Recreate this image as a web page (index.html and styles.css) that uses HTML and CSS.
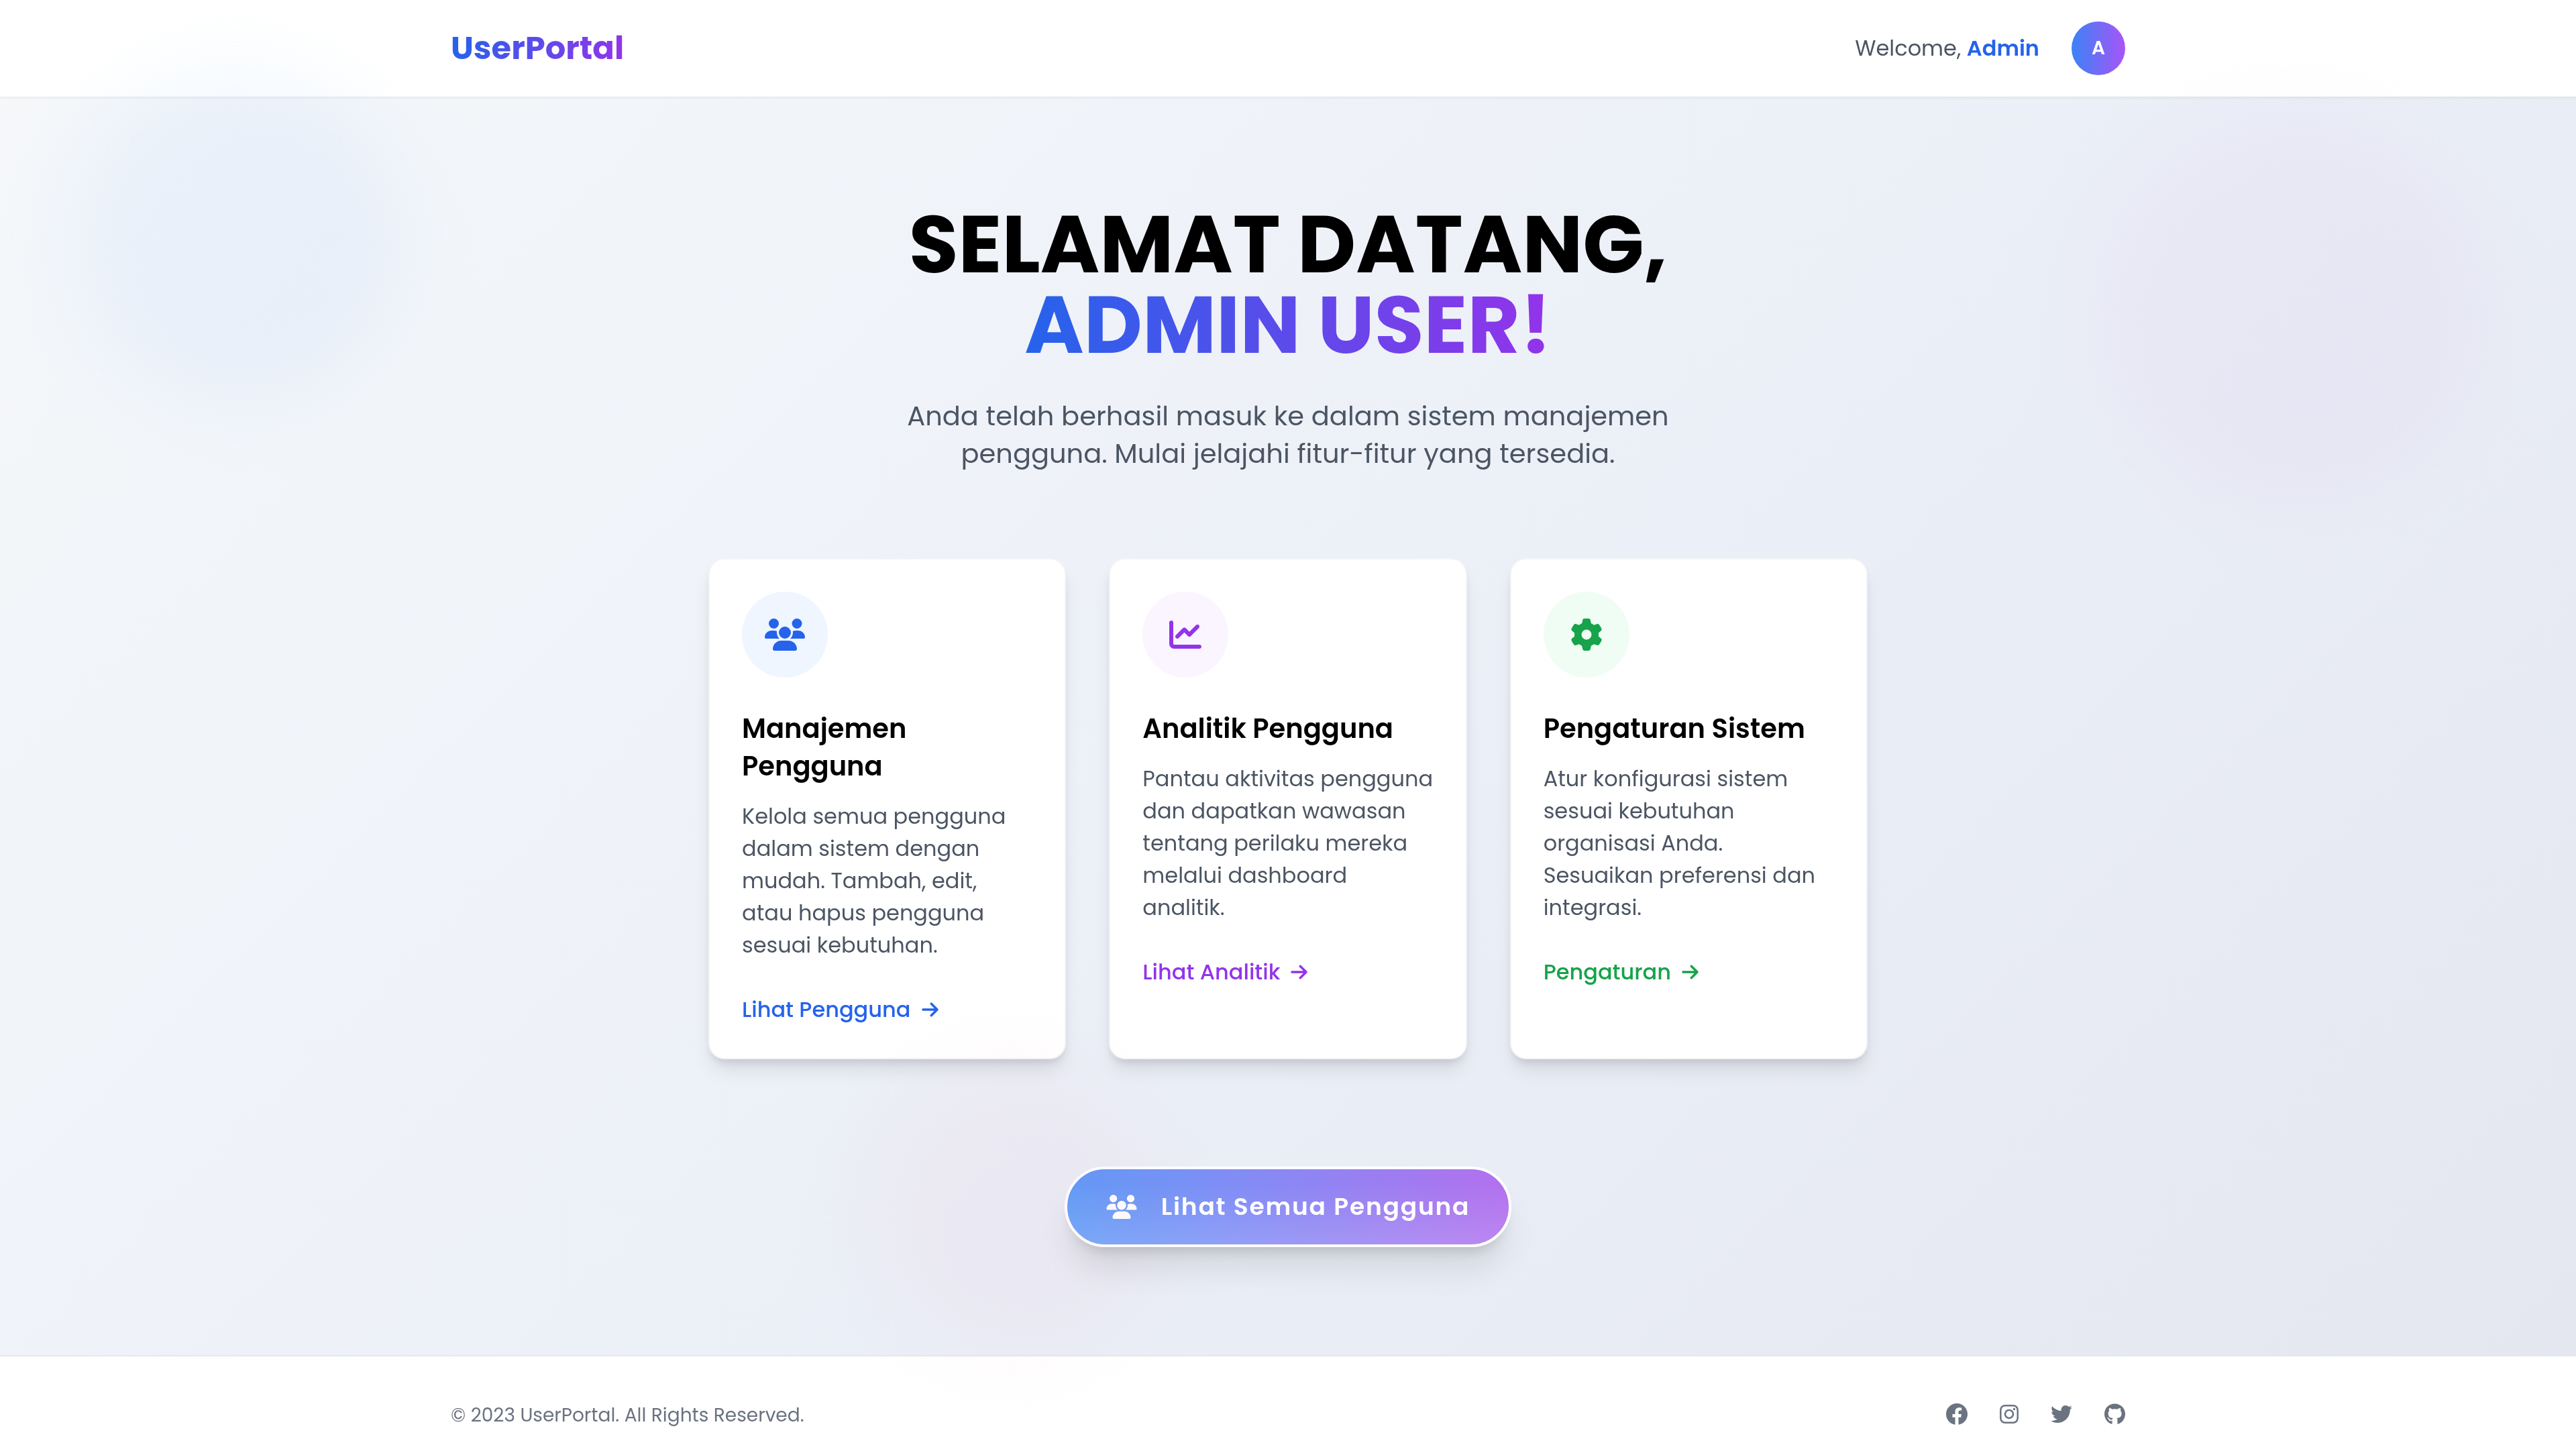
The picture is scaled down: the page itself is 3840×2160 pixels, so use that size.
FILE: index.html
```html
<!DOCTYPE html>
<html lang="id">
<head>
<meta charset="utf-8">
<title>UserPortal</title>
<meta name="viewport" content="width=device-width, initial-scale=1">
<link rel="stylesheet" href="styles.css">
</head>
<body>
<svg class="sprite" aria-hidden="true">
  <symbol id="users" viewBox="0 0 640 512"><path d="M144 0a80 80 0 1 1 0 160A80 80 0 1 1 144 0zM512 0a80 80 0 1 1 0 160A80 80 0 1 1 512 0zM0 298.700C0 239.800 47.800 192 106.700 192h42.700c15.900 0 31 3.500 44.600 9.700c-1.300 7.200-1.900 14.700-1.900 22.300c0 38.200 16.800 72.500 43.300 96c-.2 0-.4 0-.7 0H21.300C9.600 320 0 310.400 0 298.700zM405.300 320c-.2 0-.4 0-.7 0c26.600-23.500 43.300-57.800 43.300-96c0-7.600-.7-15-1.900-22.300c13.600-6.300 28.700-9.700 44.600-9.700h42.700C592.200 192 640 239.800 640 298.700c0 11.800-9.600 21.300-21.300 21.300H405.300zM224 224a96 96 0 1 1 192 0 96 96 0 1 1-192 0zM128 485.300C128 411.700 187.700 352 261.300 352H378.700C452.300 352 512 411.700 512 485.300c0 14.700-11.900 26.700-26.700 26.700H154.700c-14.700 0-26.700-11.900-26.700-26.700z"/></symbol>
  <symbol id="arrow" viewBox="0 0 448 512"><path d="M438.600 278.600c12.500-12.500 12.500-32.800 0-45.300l-160-160c-12.500-12.500-32.800-12.500-45.300 0s-12.500 32.800 0 45.300L338.800 224 32 224c-17.700 0-32 14.300-32 32s14.300 32 32 32l306.700 0L233.400 393.400c-12.500 12.500-12.500 32.800 0 45.300s32.800 12.500 45.300 0l160-160z"/></symbol>
</svg>
<div class="blob blob-blue"></div>
<div class="blob blob-purple"></div>
<div class="blob blob-pink"></div>

<header class="header">
  <div class="container bar">
    <a class="logo" href="#">UserPortal</a>
    <div class="account">
      <span class="welcome">Welcome, <strong>Admin</strong></span>
      <span class="avatar">A</span>
    </div>
  </div>
</header>

<main class="main">
  <h1 class="title">SELAMAT DATANG,<br><span class="title-name">ADMIN USER!</span></h1>
  <p class="lead">Anda telah berhasil masuk ke dalam sistem manajemen<br>pengguna. Mulai jelajahi fitur-fitur yang tersedia.</p>

  <div class="cards">
    <article class="card blue">
      <div class="badge"><svg class="icon icon-wide"><use href="#users"/></svg></div>
      <h2>Manajemen<br>Pengguna</h2>
      <p>Kelola semua pengguna<br>dalam sistem dengan<br>mudah. Tambah, edit,<br>atau hapus pengguna<br>sesuai kebutuhan.</p>
      <a href="#">Lihat Pengguna <svg class="arrow"><use href="#arrow"/></svg></a>
    </article>
    <article class="card purple">
      <div class="badge"><svg class="icon" viewBox="0 0 512 512"><path d="M64 64c0-17.700-14.300-32-32-32S0 46.300 0 64V400c0 44.200 35.800 80 80 80H480c17.700 0 32-14.300 32-32s-14.300-32-32-32H80c-8.800 0-16-7.200-16-16V64zm406.600 86.600c12.500-12.500 12.500-32.800 0-45.300s-32.800-12.500-45.300 0L320 210.700l-57.400-57.400c-12.500-12.500-32.800-12.500-45.300 0l-112 112c-12.500 12.500-12.500 32.800 0 45.300s32.800 12.500 45.300 0L240 221.300l57.400 57.400c12.500 12.500 32.800 12.500 45.300 0l128-128z"/></svg></div>
      <h2>Analitik Pengguna</h2>
      <p>Pantau aktivitas pengguna<br>dan dapatkan wawasan<br>tentang perilaku mereka<br>melalui dashboard<br>analitik.</p>
      <a href="#">Lihat Analitik <svg class="arrow"><use href="#arrow"/></svg></a>
    </article>
    <article class="card green">
      <div class="badge"><svg class="icon" viewBox="0 0 512 512"><path d="M495.900 166.600c3.200 8.700 .5 18.400-6.400 24.600l-43.300 39.400c1.100 8.300 1.700 16.800 1.700 25.400s-.6 17.100-1.700 25.400l43.300 39.400c6.900 6.200 9.600 15.900 6.400 24.600c-4.400 11.900-9.700 23.300-15.800 34.300l-4.700 8.100c-6.600 11-14 21.400-22.100 31.200c-5.900 7.200-15.700 9.600-24.500 6.800l-55.700-17.700c-13.400 10.300-28.200 18.900-44 25.400l-12.500 57.100c-2 9.100-9 16.300-18.200 17.800c-13.800 2.300-28 3.500-42.500 3.500s-28.700-1.200-42.500-3.500c-9.200-1.500-16.200-8.700-18.200-17.800l-12.500-57.100c-15.800-6.500-30.600-15.100-44-25.400L83.100 425.900c-8.800 2.800-18.600 .3-24.500-6.800c-8.100-9.800-15.500-20.200-22.100-31.200l-4.700-8.100c-6.100-11-11.400-22.400-15.800-34.300c-3.200-8.700-.5-18.400 6.400-24.600l43.300-39.400C64.600 273.100 64 264.600 64 256s.6-17.100 1.700-25.400L22.400 191.200c-6.900-6.200-9.600-15.900-6.400-24.600c4.400-11.900 9.700-23.300 15.800-34.300l4.700-8.100c6.600-11 14-21.400 22.100-31.200c5.900-7.200 15.700-9.600 24.500-6.800l55.700 17.700c13.400-10.300 28.200-18.900 44-25.400l12.500-57.100c2-9.100 9-16.300 18.200-17.800C227.300 1.200 241.500 0 256 0s28.700 1.200 42.500 3.500c9.200 1.500 16.200 8.700 18.200 17.800l12.500 57.100c15.800 6.500 30.600 15.100 44 25.400l55.700-17.700c8.800-2.800 18.600-.3 24.500 6.800c8.100 9.800 15.500 20.200 22.100 31.200l4.700 8.100c6.100 11 11.400 22.400 15.800 34.300zM256 336a80 80 0 1 0 0-160 80 80 0 1 0 0 160z"/></svg></div>
      <h2>Pengaturan Sistem</h2>
      <p>Atur konfigurasi sistem<br>sesuai kebutuhan<br>organisasi Anda.<br>Sesuaikan preferensi dan<br>integrasi.</p>
      <a href="#">Pengaturan <svg class="arrow"><use href="#arrow"/></svg></a>
    </article>
  </div>

  <button class="cta" type="button"><svg class="cta-icon"><use href="#users"/></svg>Lihat Semua Pengguna</button>
</main>

<footer class="footer">
  <div class="container bar">
    <p class="copy">© 2023 UserPortal. All Rights Reserved.</p>
    <nav class="social">
      <a href="#" aria-label="Facebook"><svg class="social-icon" viewBox="8 8 496 496"><path d="M504 256C504 119 393 8 256 8S8 119 8 256c0 123.780 90.690 226.380 209.250 245V327.690h-63V256h63v-54.640c0-62.150 37-96.480 93.670-96.480 27.140 0 55.520 4.840 55.520 4.840v61h-31.280c-30.800 0-40.410 19.120-40.410 38.730V256h68.780l-11 71.690h-57.780V501C413.310 482.380 504 379.780 504 256z"/></svg></a>
      <a href="#" aria-label="Instagram"><svg class="social-icon" viewBox="0 0 448 512"><path d="M224.100 141c-63.600 0-114.900 51.300-114.900 114.900s51.300 114.900 114.900 114.900S339 319.500 339 255.900 287.700 141 224.100 141zm0 189.600c-41.100 0-74.700-33.500-74.700-74.700s33.500-74.700 74.700-74.700 74.700 33.500 74.700 74.700-33.600 74.700-74.700 74.700zm146.400-194.300c0 14.900-12 26.800-26.800 26.800-14.900 0-26.800-12-26.800-26.800s12-26.800 26.800-26.800 26.800 12 26.800 26.800zm76.100 27.200c-1.700-35.900-9.900-67.700-36.200-93.900-26.200-26.200-58-34.400-93.900-36.200-37-2.100-147.900-2.100-184.900 0-35.800 1.700-67.600 9.900-93.900 36.100s-34.400 58-36.200 93.900c-2.100 37-2.100 147.900 0 184.900 1.700 35.900 9.900 67.700 36.200 93.900s58 34.400 93.900 36.200c37 2.100 147.900 2.100 184.900 0 35.900-1.700 67.700-9.900 93.900-36.200 26.200-26.200 34.400-58 36.200-93.900 2.100-37 2.100-147.800 0-184.800zM398.800 388c-7.800 19.600-22.900 34.700-42.600 42.600-29.500 11.700-99.500 9-132.100 9s-102.700 2.600-132.100-9c-19.600-7.800-34.700-22.900-42.600-42.600-11.700-29.500-9-99.500-9-132.100s-2.600-102.700 9-132.100c7.800-19.600 22.900-34.700 42.600-42.600 29.500-11.700 99.500-9 132.100-9s102.700-2.600 132.100 9c19.600 7.800 34.700 22.900 42.600 42.600 11.700 29.500 9 99.500 9 132.100s2.700 102.700-9 132.100z"/></svg></a>
      <a href="#" aria-label="Twitter"><svg class="social-icon" viewBox="0 0 512 512"><path d="M459.370 151.716c.325 4.548.325 9.097.325 13.645 0 138.720-105.583 298.558-298.558 298.558-59.452 0-114.680-17.219-161.137-47.106 8.447.974 16.568 1.299 25.340 1.299 49.055 0 94.213-16.568 130.274-44.832-46.132-.975-84.792-31.188-98.112-72.772 6.498.974 12.995 1.624 19.818 1.624 9.421 0 18.843-1.300 27.614-3.573-48.081-9.747-84.143-51.980-84.143-102.985v-1.299c13.969 7.797 30.214 12.670 47.431 13.319-28.264-18.843-46.781-51.005-46.781-87.391 0-19.492 5.197-37.360 14.294-52.954 51.655 63.675 129.300 105.258 216.365 109.807-1.624-7.797-2.599-15.918-2.599-24.040 0-57.828 46.782-104.934 104.934-104.934 30.213 0 57.502 12.670 76.670 33.137 23.715-4.548 46.456-13.320 66.599-25.340-7.798 24.366-24.366 44.833-46.132 57.827 21.117-2.273 41.584-8.122 60.426-16.243-14.292 20.791-32.161 39.308-52.628 54.253z"/></svg></a>
      <a href="#" aria-label="GitHub"><svg class="social-icon" viewBox="0 0 496 512"><path d="M165.900 397.400c0 2-2.300 3.600-5.200 3.600-3.300.3-5.600-1.300-5.600-3.600 0-2 2.300-3.600 5.200-3.600 3-.3 5.600 1.300 5.600 3.600zm-31.100-4.500c-.7 2 1.300 4.300 4.300 4.900 2.600 1 5.600 0 6.200-2s-1.300-4.300-4.300-5.200c-2.600-.7-5.500.3-6.200 2.300zm44.200-1.700c-2.900.7-4.900 2.600-4.600 4.900.3 2 2.900 3.300 5.900 2.600 2.900-.7 4.900-2.600 4.600-4.600-.3-1.900-3-3.200-5.900-2.900zM244.800 8C106.100 8 0 113.300 0 252c0 110.900 69.800 205.800 169.500 239.200 12.800 2.300 17.300-5.600 17.300-12.100 0-6.200-.3-40.400-.3-61.400 0 0-70 15-84.700-29.800 0 0-11.400-29.100-27.800-36.600 0 0-22.900-15.700 1.600-15.400 0 0 24.900 2 38.600 25.800 21.900 38.600 58.600 27.500 72.900 20.900 2.300-16 8.800-27.100 16-33.700-55.900-6.200-112.300-14.300-112.300-110.500 0-27.500 7.600-41.300 23.600-58.900-2.600-6.500-11.100-33.300 2.600-67.900 20.900-6.500 69 27 69 27 20-5.600 41.500-8.500 62.800-8.500s42.800 2.900 62.800 8.500c0 0 48.100-33.600 69-27 13.700 34.700 5.200 61.400 2.600 67.900 16 17.700 25.800 31.500 25.800 58.900 0 96.500-58.900 104.200-114.800 110.500 9.200 7.900 17 22.900 17 46.400 0 33.700-.3 75.400-.3 83.600 0 6.500 4.600 14.400 17.300 12.100C428.200 457.800 496 362.900 496 252 496 113.300 383.500 8 244.800 8z"/></svg></a>
    </nav>
  </div>
</footer>
</body>
</html>
```
FILE: styles.css
```css
* { box-sizing: border-box; margin: 0; padding: 0; }

body {
  position: relative;
  min-height: 100vh;
  display: flex;
  flex-direction: column;
  overflow-x: hidden;
  font-family: Poppins, Inter, "Noto Sans", sans-serif;
  font-size: 32px;
  line-height: 48px;
  color: #000;
  background: linear-gradient(135deg, #f6f8fa, #ebeff7 55%, #e4e6f0);
}

a { color: inherit; text-decoration: none; }
svg { display: block; fill: currentColor; }
.sprite { position: absolute; width: 0; height: 0; }

.container {
  width: 100%;
  max-width: 2560px;
  margin: 0 auto;
  padding: 0 32px;
}

.bar { display: flex; align-items: center; justify-content: space-between; }

/* Soft coloured spots floating over the page */
.blob {
  position: absolute;
  z-index: 2;
  border-radius: 50%;
  filter: blur(56px);
  mix-blend-mode: multiply;
  pointer-events: none;
}
.blob-blue { left: 96px; top: 96px; width: 512px; height: 512px; background: #f4f9ff; }
.blob-purple { left: 3112px; top: 160px; width: 592px; height: 592px; background: #fdf9fe; }
.blob-pink { left: 1288px; top: 1576px; width: 448px; height: 448px; background: #fef9fb; }

/* Header */
.header {
  position: relative;
  padding: 32px 0;
  background: #fff;
  box-shadow: 0 2px 4px rgba(0, 0, 0, 0.06);
}

.logo {
  font-size: 48px;
  line-height: 64px;
  font-weight: 700;
  color: transparent;
  background: linear-gradient(90deg, #2563eb, #9333ea);
  background-clip: text;
}

.account { display: flex; align-items: center; gap: 48px; }
.welcome { color: #4b5563; }
.welcome strong { font-weight: 600; color: #2563eb; }

.avatar {
  display: grid;
  place-items: center;
  width: 80px;
  height: 80px;
  border-radius: 50%;
  font-size: 28px;
  font-weight: 600;
  color: #fff;
  background: linear-gradient(90deg, #3b82f6, #a855f7);
}

/* Main */
.main {
  flex: 1;
  display: flex;
  flex-direction: column;
  align-items: center;
  padding: 160px 32px;
}

.title {
  font-size: 120px;
  line-height: 120px;
  font-weight: 700;
  text-align: center;
}

.title-name {
  display: inline-block;
  color: transparent;
  background: linear-gradient(90deg, #2563eb, #9333ea);
  background-clip: text;
}

.lead {
  margin: 48px 0 128px;
  font-size: 40px;
  line-height: 56px;
  text-align: center;
  color: #4b5563;
}

.cards {
  display: grid;
  grid-template-columns: repeat(3, 1fr);
  gap: 64px;
  width: 100%;
  max-width: 1728px;
}

.card {
  padding: 48px;
  border: 2px solid #f3f4f6;
  border-radius: 24px;
  background: #fff;
  white-space: nowrap;
  box-shadow: 0 20px 30px -6px rgba(0, 0, 0, 0.1), 0 8px 12px -4px rgba(0, 0, 0, 0.1);
}

.badge {
  display: grid;
  place-items: center;
  width: 128px;
  height: 128px;
  margin-bottom: 48px;
  border-radius: 50%;
}

.icon { width: 48px; height: 48px; }
.icon-wide { width: 60px; }

.card h2 { margin-bottom: 23px; font-size: 40px; line-height: 56px; font-weight: 600; }
.card p { margin-bottom: 48px; color: #4b5563; }
.card a { display: inline-flex; align-items: center; gap: 16px; font-weight: 500; }
.arrow { width: 25px; height: 28px; }

.blue .badge { background: #eff6ff; }
.blue .badge, .blue a { color: #2563eb; }
.purple .badge { background: #faf5ff; }
.purple .badge, .purple a { color: #9333ea; }
.green .badge { background: #f0fdf4; }
.green .badge, .green a { color: #16a34a; }

.cta {
  display: flex;
  align-items: center;
  gap: 36px;
  margin-top: 160px;
  padding: 28px 58px;
  border: 4px solid #fff;
  border-radius: 60px;
  font: inherit;
  font-size: 36px;
  line-height: 56px;
  font-weight: 600;
  letter-spacing: 0.05em;
  color: #fff;
  background: linear-gradient(0deg, rgba(255, 255, 255, 0.15), rgba(255, 255, 255, 0) 80%), linear-gradient(80deg, #609ffa, #b470ee) border-box;
  box-shadow: 0 40px 50px -10px rgba(0, 0, 0, 0.1), 0 16px 20px -12px rgba(0, 0, 0, 0.15);
}

.cta-icon { width: 46px; height: 36px; }

/* Footer */
.footer {
  position: relative;
  padding: 64px 0 26px;
  border-top: 2px solid #e5e7eb;
  background: #fff;
}

.copy { font-size: 28px; color: #6b7280; }
.social { display: flex; gap: 48px; padding-bottom: 4px; color: #6b7280; }
.social-icon { width: auto; height: 32px; }
```
